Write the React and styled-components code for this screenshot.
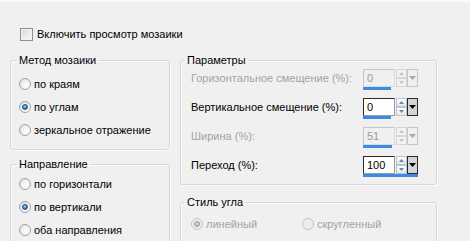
import React from 'react'
import styled, { createGlobalStyle } from 'styled-components'

const GlobalStyle = createGlobalStyle`
  html, body {
    margin: 0;
    padding: 0;
    background: #f0f0f0;
  }
  body {
    font-family: "Liberation Sans", Arial, sans-serif;
    font-size: 11px;
    color: #000;
  }
`

const Page = styled.div`
  width: 470px;
  height: 241px;
  overflow: hidden;
  box-sizing: border-box;
  border-top: 2px solid #fafafa;
  padding: 25px 0 0 10px;
`

const CheckRow = styled.label`
  display: flex;
  align-items: center;
  gap: 4px;
  height: 14px;
  padding-left: 10px;
  line-height: 14px;
`

const CheckBox = styled.span`
  box-sizing: border-box;
  width: 13px;
  height: 13px;
  border: 1px solid #8f8f8f;
  background: linear-gradient(135deg, #d8d8d8 0%, #eeeeee 60%, #fafafa 100%);
  box-shadow: inset 0 0 0 1px #f4f4f4;
`

const Columns = styled.div`
  display: flex;
  gap: 10px;
  margin-top: 12px;
`

const Column = styled.div`
  display: flex;
  flex-direction: column;
  gap: ${p => p.$gap}px;
  width: ${p => p.$w}px;
`

const Group = styled.fieldset`
  margin: 0;
  min-width: 0;
  border: 1px solid #d8d8d8;
  border-radius: 3px;
  box-shadow: 1px 1px 0 #fbfbfb, inset 1px 1px 0 #fbfbfb;
  padding: ${p => p.$pt}px ${p => p.$pr || 8}px ${p => p.$pb}px ${p => p.$pl}px;
`

const Legend = styled.legend`
  margin-left: ${p => p.$ml}px;
  padding: 0 2px;
  line-height: 14px;
  height: 14px;
`

const RadioList = styled.div`
  display: flex;
  flex-direction: ${p => (p.$row ? 'row' : 'column')};
`

const RadioItem = styled.label`
  display: flex;
  align-items: center;
  gap: 3px;
  height: 23px;
  width: ${p => (p.$w ? `${p.$w}px` : 'auto')};
  color: ${p => (p.$disabled ? '#a3a3a3' : '#000')};
`

const RadioDot = styled.span`
  position: relative;
  box-sizing: border-box;
  width: 12px;
  height: 12px;
  border-radius: 50%;
  border: 1px solid ${p => (p.$disabled ? '#c4c4c4' : '#a2a2a2')};
  background: ${p =>
    p.$disabled
      ? '#ececec'
      : 'radial-gradient(circle at 65% 65%, #ffffff 0%, #f2f2f2 45%, #d4d4d4 100%)'};
  &::after {
    content: '';
    display: ${p => (p.$checked ? 'block' : 'none')};
    position: absolute;
    left: 2px;
    top: 2px;
    width: 6px;
    height: 6px;
    border-radius: 50%;
    box-sizing: border-box;
    border: 1px solid ${p => (p.$disabled ? '#9c9c9c' : '#1d4f85')};
    background: ${p =>
      p.$disabled
        ? 'radial-gradient(circle at 40% 40%, #e0e0e0, #a8a8a8)'
        : 'radial-gradient(circle at 40% 35%, #9fd3ff 0%, #3a86d0 50%, #1b5ea4 100%)'};
  }
`

const ParamRow = styled.div`
  display: flex;
  justify-content: space-between;
  align-items: flex-start;
  height: 21px;
  & + & {
    margin-top: 8px;
  }
`

const ParamLabel = styled.span`
  line-height: 18px;
  color: ${p => (p.$disabled ? '#a3a3a3' : '#000')};
`

const Spin = styled.div`
  display: flex;
  flex-direction: column;
  width: 55px;
`

const SpinTop = styled.div`
  display: flex;
  height: 18px;
`

const SpinInput = styled.div`
  box-sizing: border-box;
  width: 32px;
  height: 18px;
  padding-left: 3px;
  line-height: 16px;
  border: 1px solid ${p => (p.$disabled ? '#c6c6c6' : '#2a2a2a')};
  border-right-color: ${p => (p.$disabled ? '#dcdcdc' : '#9a9a9a')};
  border-bottom-color: ${p => (p.$disabled ? '#dcdcdc' : '#9a9a9a')};
  background: ${p => (p.$disabled ? '#f0f0f0' : '#fff')};
  color: ${p => (p.$disabled ? '#9a9a9a' : '#000')};
`

const SpinButtons = styled.div`
  display: flex;
  flex-direction: column;
  width: 11px;
  margin-left: 1px;
`

const SpinBtn = styled.div`
  box-sizing: border-box;
  height: 9px;
  display: flex;
  align-items: center;
  justify-content: center;
  border: 1px solid ${p => (p.$disabled ? '#d6d6d6' : '#b8c4d2')};
  background: ${p => (p.$disabled ? '#f2f2f2' : 'linear-gradient(#ffffff, #e4e8ee)')};
`

const DropBtn = styled.div`
  box-sizing: border-box;
  width: 11px;
  height: 18px;
  display: flex;
  align-items: center;
  justify-content: center;
  border: 1px solid ${p => (p.$disabled ? '#c6c6c6' : '#2a2a2a')};
  background: ${p => (p.$disabled ? '#f0f0f0' : '#d4d4d4')};
`

const Bar = styled.div`
  height: 3px;
  background: #3c8be3;
`

function Triangle({ up, color, w = 5, h = 3 }) {
  const pts = up ? `0,${h} ${w / 2},0 ${w},${h}` : `0,0 ${w / 2},${h} ${w},0`
  return (
    <svg width={w} height={h} viewBox={`0 0 ${w} ${h}`}>
      <polygon points={pts} fill={color} />
    </svg>
  )
}

function SpinBox({ value, disabled, barWidth }) {
  const arrow = disabled ? '#c0c0c0' : '#6b86a8'
  return (
    <Spin>
      <SpinTop>
        <SpinInput $disabled={disabled}>{value}</SpinInput>
        <SpinButtons>
          <SpinBtn $disabled={disabled}><Triangle up color={arrow} /></SpinBtn>
          <SpinBtn $disabled={disabled}><Triangle color={arrow} /></SpinBtn>
        </SpinButtons>
        <DropBtn $disabled={disabled}>
          <Triangle color={disabled ? '#a8a8a8' : '#000'} w={7} h={4} />
        </DropBtn>
      </SpinTop>
      <Bar style={{ width: barWidth }} />
    </Spin>
  )
}

function Radio({ label, checked, disabled, width }) {
  return (
    <RadioItem $disabled={disabled} $w={width}>
      <RadioDot $checked={checked} $disabled={disabled} />
      {label}
    </RadioItem>
  )
}

const params = [
  { label: 'Горизонтальное смещение (%):', value: '0', disabled: true, bar: 28 },
  { label: 'Вертикальное смещение (%):', value: '0', disabled: false, bar: 28 },
  { label: 'Ширина (%):', value: '51', disabled: true, bar: 29 },
  { label: 'Переход (%):', value: '100', disabled: false, bar: 55 },
]

export default function App() {
  return (
    <>
      <GlobalStyle />
      <Page>
        <CheckRow>
          <CheckBox />
          Включить просмотр мозаики
        </CheckRow>
        <Columns>
          <Column $w={160} $gap={7}>
            <Group $pt={5} $pb={8} $pl={8}>
              <Legend $ml={-2}>Метод мозаики</Legend>
              <RadioList>
                <Radio label="по краям" />
                <Radio label="по углам" checked />
                <Radio label="зеркальное отражение" />
              </RadioList>
            </Group>
            <Group $pt={1} $pb={8} $pl={8}>
              <Legend $ml={-2}>Направление</Legend>
              <RadioList>
                <Radio label="по горизонтали" />
                <Radio label="по вертикали" checked />
                <Radio label="оба направления" />
              </RadioList>
            </Group>
          </Column>
          <Column $w={257} $gap={10}>
            <Group $pt={2} $pb={7} $pl={10} $pr={18}>
              <Legend $ml={-6}>Параметры</Legend>
              {params.map(p => (
                <ParamRow key={p.label}>
                  <ParamLabel $disabled={p.disabled}>{p.label}</ParamLabel>
                  <SpinBox value={p.value} disabled={p.disabled} barWidth={p.bar} />
                </ParamRow>
              ))}
            </Group>
            <Group $pt={3} $pb={20} $pl={10}>
              <Legend $ml={-6}>Стиль угла</Legend>
              <RadioList $row>
                <Radio label="линейный" checked disabled width={111} />
                <Radio label="скругленный" disabled />
              </RadioList>
            </Group>
          </Column>
        </Columns>
      </Page>
    </>
  )
}
